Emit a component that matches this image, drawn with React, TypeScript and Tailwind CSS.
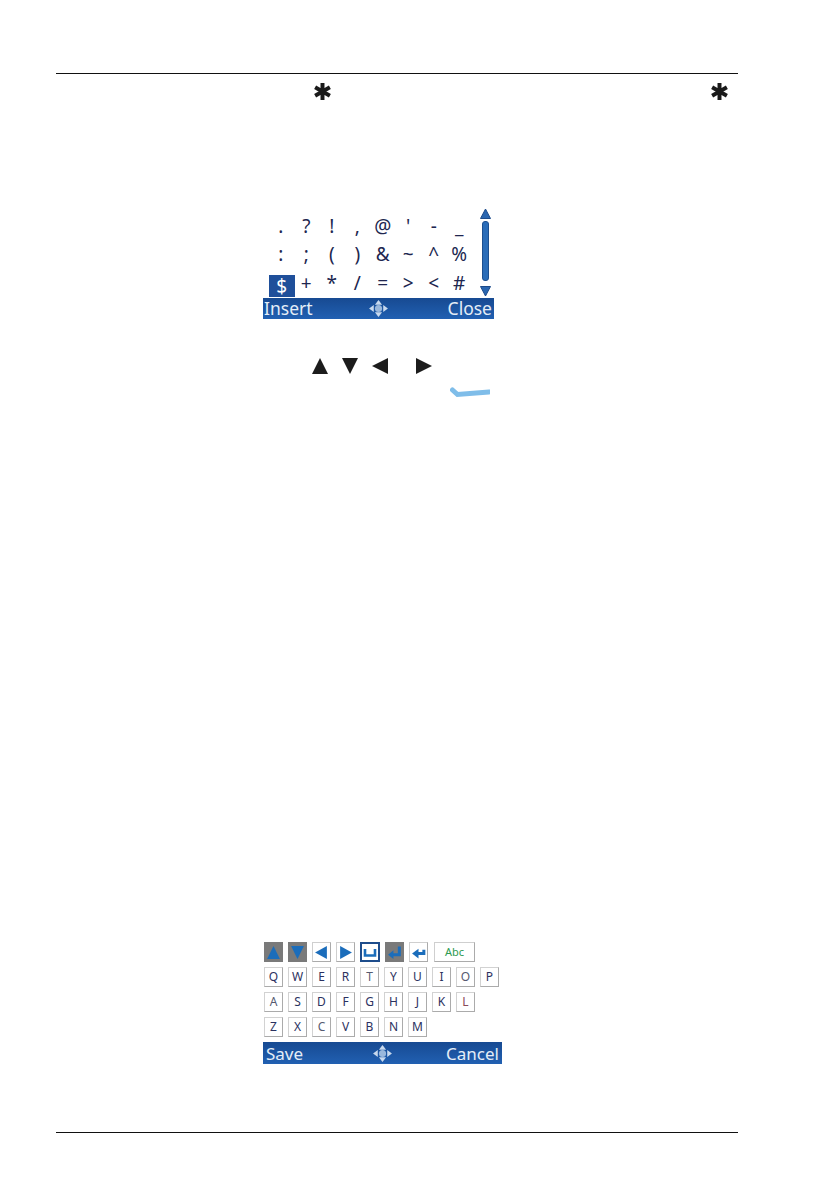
const symbols = [
  [".", "?", "!", ",", "@", "'", "-", "_"],
  [":", ";", "(", ")", "&", "~", "^", "%"],
  ["$", "+", "*", "/", "=", ">", "<", "#"],
];
const keyRows = [
  ["Q", "W", "E", "R", "T", "Y", "U", "I", "O", "P"],
  ["A", "S", "D", "F", "G", "H", "J", "K", "L"],
  ["Z", "X", "C", "V", "B", "N", "M"],
];
const ns = "font-['Noto_Sans',sans-serif]";

function Star({ className }: { className: string }) {
  return (
    <svg viewBox="0 0 18 18" className={className}>
      <path d="M9 0v18M1.2 4.5l15.6 9M16.8 4.5l-15.6 9" stroke="#1a1a1a" strokeWidth="4.2" fill="none" />
    </svg>
  );
}

function Nav({ className }: { className: string }) {
  return (
    <svg viewBox="0 0 20 18" className={className}>
      <path d="M10 0l3.8 5H6.2zM10 18l-3.8-5h7.6zM0 9l5-3.8v7.6zM20 9l-5 3.8V5.2z" fill="#c8d9ee" />
      <circle cx="10" cy="9" r="3.8" fill="#9ab8dc" />
    </svg>
  );
}

function Tri({ d, className }: { d: string; className: string }) {
  return (
    <svg viewBox="0 0 16 16" className={className}>
      <path d={d} fill="#1c1c1c" />
    </svg>
  );
}

function Bar({ left, right, className, text }: { left: string; right: string; className: string; text: string }) {
  return (
    <div className={`flex items-center bg-gradient-to-b from-[#174a92] to-[#2160b2] leading-none text-[#e4edf7] ${ns} ${text} ${className}`}>
      <span className="flex-1">{left}</span>
      <Nav className="h-[17px] w-[19px]" />
      <span className="flex-1 text-right">{right}</span>
    </div>
  );
}

function KeyIcon({ dark, children }: { dark?: boolean; children: React.ReactNode }) {
  return (
    <div className={`flex h-[20px] w-[19px] items-center justify-center ${dark ? "bg-[#7a7a7a]" : "border border-[#cfcfcf] border-b-[#ababab] border-r-[#ababab] bg-white"}`}>
      <svg viewBox="0 0 14 14" className="h-[15px] w-[15px] shrink-0">
        {children}
      </svg>
    </div>
  );
}

function keyColor(k: string) {
  if (k === "L") return "text-[#8a4a58]";
  if (k === "T" || k === "A" || k === "C" || k === "O") return "text-[#555a70]";
  return "text-[#2b3160]";
}

export default function App() {
  return (
    <div className="flex h-[1190px] w-[840px] flex-col bg-white pt-[73px]">
      <div className="mx-[56px] w-[682px] border-t border-[#111]" />
      <div className="ml-[314px] mt-[9px] flex w-[414px] justify-between">
        <Star className="h-[17px] w-[17px]" />
        <Star className="h-[17px] w-[17px]" />
      </div>

      <div className={`ml-[263px] mt-[108px] w-[231px] ${ns}`}>
        <div className="flex h-[90px] pl-[5px] pr-[3px]">
          <div className="mt-[4px] grid h-[86px] w-[205px] grid-cols-8 grid-rows-3 text-[19px] leading-none text-[#20264f]">
            {symbols.flat().map((c) => (
              <div
                key={c}
                className={`flex items-center justify-center ${c === "$" ? "-mr-[1px] mb-[1px] ml-[1px] mt-[6px] bg-[#1f4f9a] text-white" : ""}`}
              >
                {c}
              </div>
            ))}
          </div>
          <div className="ml-[8px] flex w-[11px] flex-col items-center">
            <svg viewBox="0 0 11 11" className="h-[11px] w-[11px]">
              <path d="M5.5 1L10.5 10.5H.5z" fill="#2a66b0" stroke="#1c4a8a" strokeLinejoin="round" />
            </svg>
            <div className="mt-[2px] h-[60px] w-[7px] rounded-[3px] border border-[#1c4f90] bg-[#2a6cb8]" />
            <svg viewBox="0 0 11 11" className="mt-[5px] h-[11px] w-[11px]">
              <path d="M5.5 10L.5.5h10z" fill="#2a66b0" stroke="#1c4a8a" strokeLinejoin="round" />
            </svg>
          </div>
        </div>
        <Bar left="Insert" right="Close" text="text-[17.5px]" className="h-[21px] pl-[1px] pr-[2px]" />
      </div>

      <div className="ml-[312px] mt-[38px] flex h-[17px] items-center">
        <Tri d="M8 0l8 16H0z" className="h-[16px] w-[16px]" />
        <Tri d="M0 0h16L8 16z" className="ml-[14px] h-[16px] w-[16px]" />
        <Tri d="M16 0v16L0 8z" className="ml-[14px] h-[16px] w-[16px]" />
        <Tri d="M0 0v16l16-8z" className="ml-[28px] h-[16px] w-[16px]" />
      </div>
      <svg viewBox="0 0 40 12" className="ml-[450px] mt-[13px] h-[12px] w-[40px]">
        <path d="M2.5 3L7.5 7.5L39 5" stroke="#7fbde9" strokeWidth="5" strokeLinecap="round" fill="none" />
      </svg>

      <div className="ml-[263px] mt-[543px] w-[239px]">
        <div className="flex flex-col gap-[5px] pl-[1px]">
          <div className="flex gap-[5px]">
            <KeyIcon dark><path d="M7 1l6 12H1z" fill="#1b6dbb" /></KeyIcon>
            <KeyIcon dark><path d="M7 13L1 1h12z" fill="#1b6dbb" /></KeyIcon>
            <KeyIcon><path d="M1 7l11-6v12z" fill="#1b6dbb" /></KeyIcon>
            <KeyIcon><path d="M13 7L2 1v12z" fill="#1b6dbb" /></KeyIcon>
            <div className="flex h-[20px] w-[20px] items-center justify-center border-2 border-[#1e4d8c] bg-white">
              <svg viewBox="0 0 14 14" className="h-[14px] w-[14px] shrink-0">
                <path d="M2 4v6.5h10V4" stroke="#1b6dbb" strokeWidth="2.6" fill="none" />
              </svg>
            </div>
            <KeyIcon dark>
              <path d="M11.5 1.5v7.5H5" stroke="#1b6dbb" strokeWidth="2.8" fill="none" />
              <path d="M6 5v8L1 9z" fill="#1b6dbb" />
            </KeyIcon>
            <KeyIcon>
              <path d="M12 4.5v3.5H6" stroke="#1b6dbb" strokeWidth="2.8" fill="none" />
              <path d="M7 3.5v9L1 8z" fill="#1b6dbb" />
            </KeyIcon>
            <div className={`ml-[1px] flex h-[20px] w-[41px] items-center justify-center border border-[#cfcfcf] border-b-[#ababab] border-r-[#ababab] text-[11px] text-[#2e9a50] ${ns}`}>
              Abc
            </div>
          </div>
          {keyRows.map((row) => (
            <div key={row[0]} className={`flex gap-[5px] ${ns}`}>
              {row.map((k) => (
                <div
                  key={k}
                  className={`flex h-[20px] w-[19px] items-center justify-center border border-[#d2d2d2] border-b-[#ababab] border-r-[#ababab] text-[12px] leading-none ${keyColor(k)}`}
                >
                  {k}
                </div>
              ))}
            </div>
          ))}
        </div>
        <Bar left="Save" right="Cancel" text="text-[17px]" className="mt-[5px] h-[22px] pl-[3px] pr-[3px]" />
      </div>

      <div className="mx-[56px] mt-[68px] w-[682px] border-t border-[#111]" />
    </div>
  );
}
